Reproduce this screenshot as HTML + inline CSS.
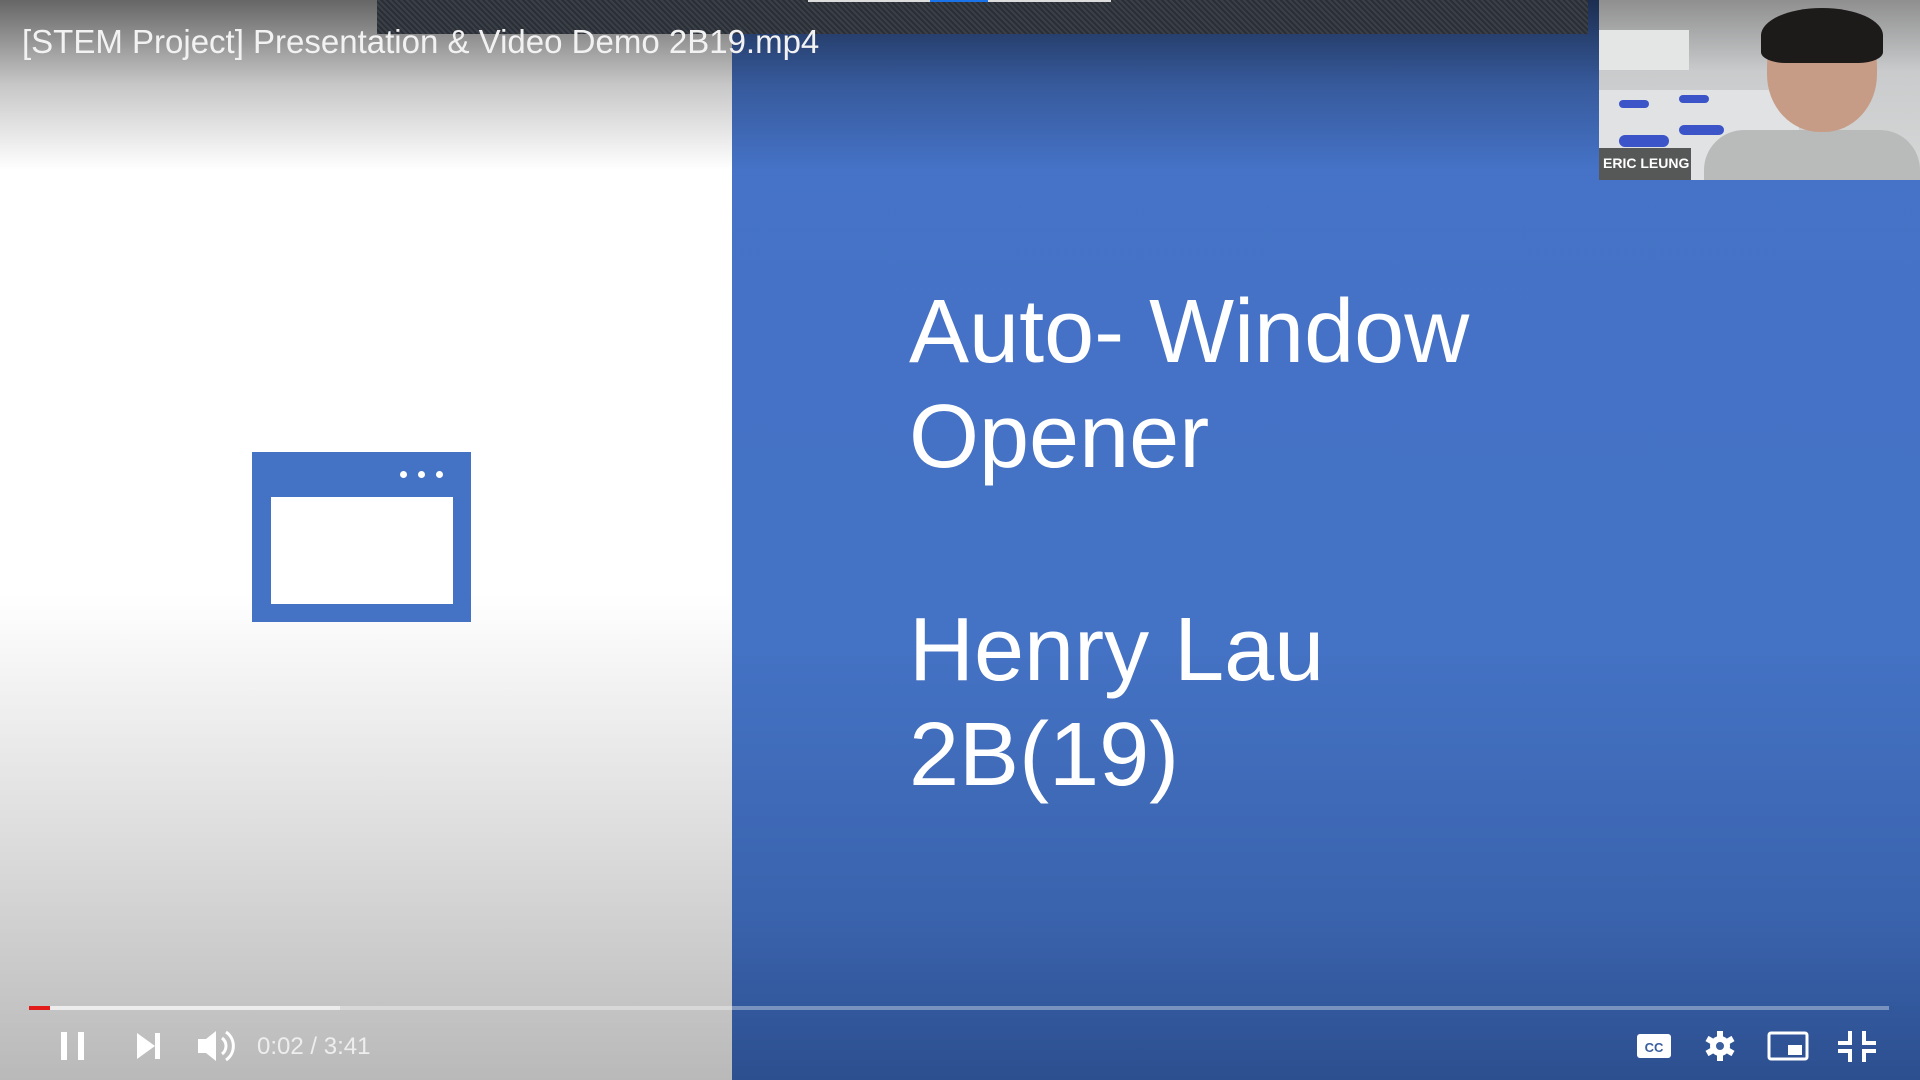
<!DOCTYPE html>
<html><head><meta charset="utf-8"><style>
*{margin:0;padding:0;box-sizing:border-box}
body{width:1920px;height:1080px;overflow:hidden;position:relative;font-family:"Liberation Sans",sans-serif;background:#fff}
.left{position:absolute;left:0;top:0;width:732px;height:1080px;background:linear-gradient(#fff 0%,#fff 55%,#d9d9d9 80%,#b9b9b9 100%)}
.right{position:absolute;left:732px;top:0;width:1188px;height:1080px;background:linear-gradient(#4673c8 0%,#4472c4 60%,#3a63ad 85%,#2c4f8f 100%)}
.topshade{position:absolute;left:0;top:0;width:1920px;height:170px;background:linear-gradient(rgba(0,0,0,.6),rgba(0,0,0,.22) 50%,rgba(0,0,0,0))}
.hatch{position:absolute;left:377px;top:0;width:1211px;height:34px;background:repeating-linear-gradient(45deg,#3a3f48 0 2px,#2a2e35 2px 4px)}
.ind{position:absolute;top:0;height:2px;background:#ddd}
.title{position:absolute;left:22px;top:23px;color:#f2f2f2;font-size:33px;letter-spacing:0;white-space:nowrap}
.cam{position:absolute;left:1599px;top:0;width:321px;height:180px;background:linear-gradient(#8f8f8f,#c9cbcc 40%,#d7d8d8);overflow:hidden}
.slide{position:absolute;left:909px;color:#fff;font-size:90px;line-height:1;white-space:nowrap;font-family:"Liberation Sans",sans-serif}
.prog{position:absolute;left:29px;top:1006px;width:1860px;height:4px;background:rgba(255,255,255,.35)}
.time{position:absolute;left:257px;top:1033px;color:#eee;font-size:24px}
</style></head><body>
<div class="left"></div><div class="right"></div>
<div class="topshade"></div>
<div class="hatch"></div>
<div class="ind" style="left:808px;width:122px"></div>
<div class="ind" style="left:930px;width:58px;background:#1a73e8"></div>
<div class="ind" style="left:988px;width:123px"></div>
<div class="title">[STEM Project] Presentation &amp; Video Demo 2B19.mp4</div>

<div class="cam">
 <div style="position:absolute;left:0;top:30px;width:90px;height:40px;background:#e4e6e6"></div>
 <div style="position:absolute;left:0;top:90px;width:200px;height:90px;background:#e0e2e3"></div>
 <div style="position:absolute;left:20px;top:100px;width:30px;height:8px;background:#3b55c8;border-radius:4px"></div>
 <div style="position:absolute;left:80px;top:95px;width:30px;height:8px;background:#3b55c8;border-radius:4px"></div>
 <div style="position:absolute;left:20px;top:135px;width:50px;height:12px;background:#3b55c8;border-radius:6px"></div>
 <div style="position:absolute;left:80px;top:125px;width:45px;height:10px;background:#3b55c8;border-radius:5px"></div>
 <div style="position:absolute;left:105px;top:130px;width:216px;height:60px;background:#b9bbbb;border-radius:40px 40px 0 0"></div>
 <div style="position:absolute;left:168px;top:12px;width:110px;height:120px;background:#c79c86;border-radius:45% 45% 48% 48%"></div>
 <div style="position:absolute;left:162px;top:8px;width:122px;height:55px;background:#1d1a1a;border-radius:50% 50% 20% 20%"></div>
 <div style="position:absolute;left:0;top:148px;width:92px;height:32px;background:rgba(40,40,40,.75)"></div>
 <div style="position:absolute;left:4px;top:155px;color:#fff;font-size:14px;font-weight:bold">ERIC LEUNG</div>
</div>

<div style="position:absolute;left:252px;top:452px;width:219px;height:170px;background:#4472c4"></div>
<div style="position:absolute;left:271px;top:497px;width:182px;height:107px;background:#fff"></div>
<div style="position:absolute;left:400px;top:471px;width:7px;height:7px;background:#fff;border-radius:50%"></div>
<div style="position:absolute;left:418px;top:471px;width:7px;height:7px;background:#fff;border-radius:50%"></div>
<div style="position:absolute;left:436px;top:471px;width:7px;height:7px;background:#fff;border-radius:50%"></div>

<div class="slide" style="top:287px">Auto- Window</div>
<div class="slide" style="top:392px">Opener</div>
<div class="slide" style="top:605px">Henry Lau</div>
<div class="slide" style="top:710px">2B(19)</div>

<div class="prog"><div style="width:311px;height:4px;background:rgba(255,255,255,.55)"></div><div style="position:absolute;left:0;top:0;width:21px;height:4px;background:#e21b1b"></div></div>

<svg style="position:absolute;left:0;top:1020px" width="1920" height="52" fill="#fff">
 <rect x="61" y="12" width="6" height="28"/><rect x="78" y="12" width="6" height="28"/>
 <path d="M137 13 L155 26 L137 39Z"/><rect x="155" y="13" width="5" height="26"/>
 <path d="M198 19h8l10-8v30l-10-8h-8z"/><path d="M222 18a10 10 0 0 1 0 16" stroke="#fff" stroke-width="3" fill="none"/><path d="M226 12a17 17 0 0 1 0 28" stroke="#fff" stroke-width="3" fill="none"/>
 <rect x="1637" y="14" width="34" height="24" rx="3"/>
 <text x="1654" y="32" font-size="13" font-weight="bold" fill="#3a5e9e" text-anchor="middle" font-family="Liberation Sans">CC</text>
 <circle cx="1720" cy="26" r="10"/><g stroke="#fff" stroke-width="6"><line x1="1720" y1="11" x2="1720" y2="41"/><line x1="1707" y1="18.5" x2="1733" y2="33.5"/><line x1="1707" y1="33.5" x2="1733" y2="18.5"/></g><circle cx="1720" cy="26" r="4" fill="#3a5e9e"/>
 <rect x="1769" y="13" width="38" height="26" rx="2" fill="none" stroke="#fff" stroke-width="3"/><rect x="1788" y="25" width="14" height="10"/>
 <path d="M1848 11v10h-10v4h14v-14zM1862 11v14h14v-4h-10v-10zM1838 29v4h10v9h4v-13zM1862 29v13h4v-9h10v-4z"/>
</svg>
<div class="time">0:02 / 3:41</div>
</body></html>
